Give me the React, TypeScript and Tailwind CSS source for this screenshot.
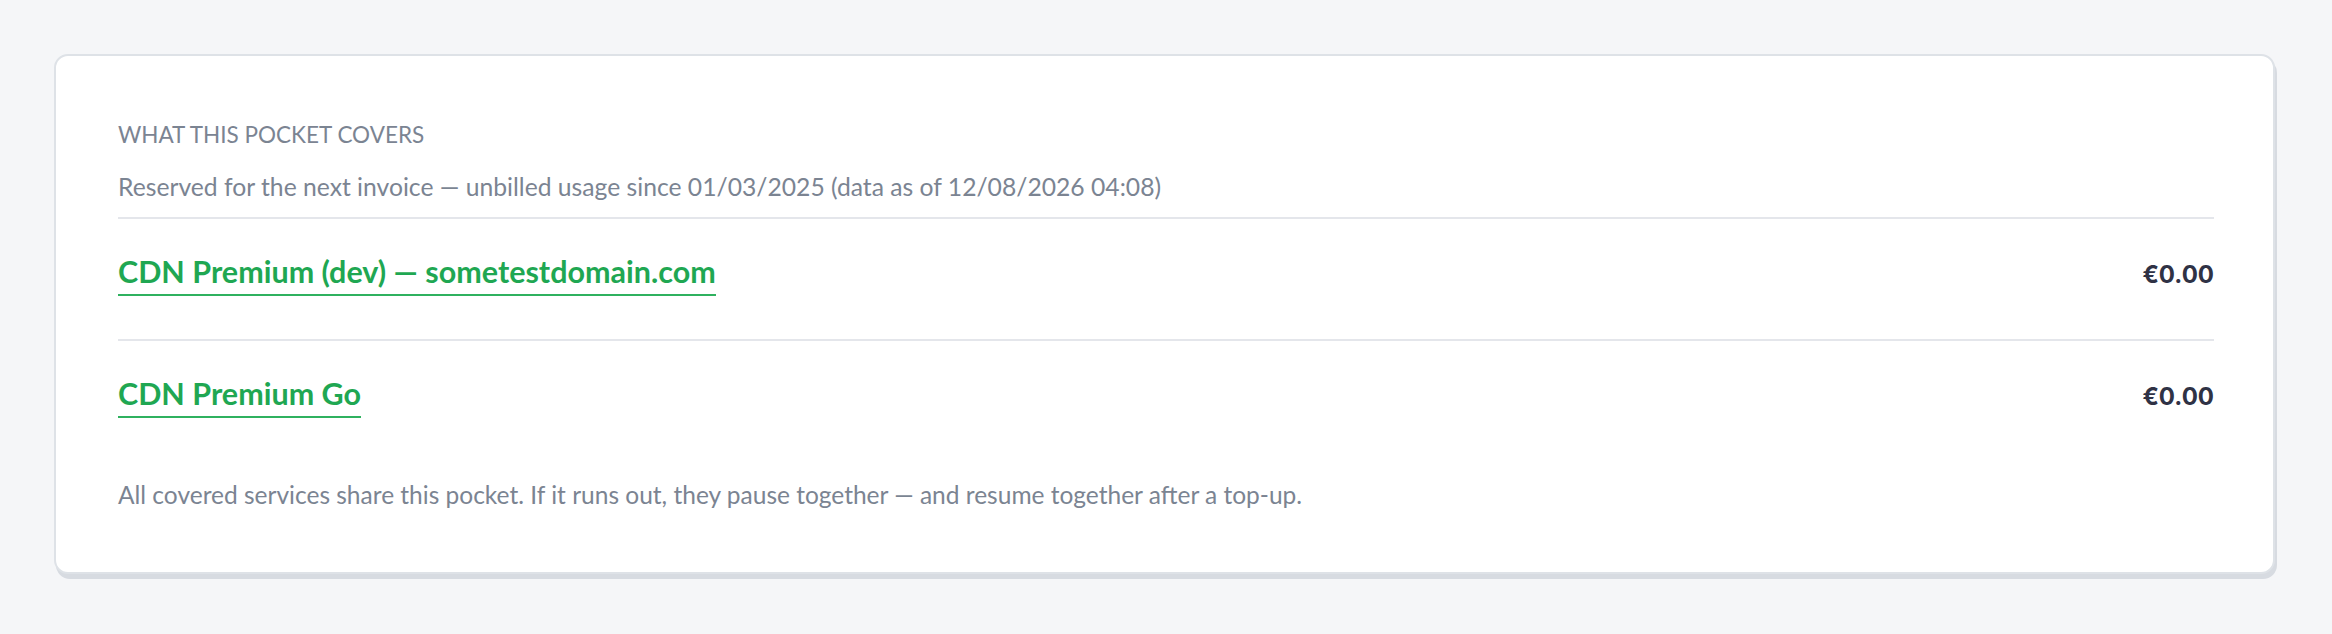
import React from "react";

const rows = [
  { name: "CDN Premium (dev) — sometestdomain.com", amount: "€0.00" },
  { name: "CDN Premium Go", amount: "€0.00" },
];

export default function App() {
  return (
    <div className="min-h-screen bg-[#f5f6f8] pl-[54px] pr-[57px] pt-[54px] pb-[54px] font-['Lato',sans-serif]">
      <div className="rounded-[14px] border-2 border-[#dee2e7] bg-white pl-[62px] pr-[59px] pt-[64px] pb-[60px] shadow-[2px_5px_0_0_#d7dbe1]">
        <div className="border-b-2 border-[#e4e6eb] pb-[13px]">
          <h2 className="text-[22.5px] leading-[30px] uppercase text-[#7b8492]">
            What this pocket covers
          </h2>
          <p className="mt-[20px] text-[24.7px] leading-[34px] text-[#7b8492]">
            Reserved for the next invoice — unbilled usage since 01/03/2025 (data as of 12/08/2026 04:08)
          </p>
        </div>

        {rows.map((row, i) => (
          <div
            key={row.name}
            className={
              i === 0
                ? "flex h-[122px] items-baseline justify-between border-b-2 border-[#e4e6eb] pt-[32px]"
                : "flex h-[120px] items-baseline justify-between pt-[32px]"
            }
          >
            <a
              href="#"
              className="inline-block border-b-[2.5px] border-[#2fb15f] pb-[3px] text-[30.5px] font-bold leading-[40px] text-[#1fa752]"
            >
              {row.name}
            </a>
            <span className="font-['Inter',sans-serif] text-[24px] font-bold leading-[40px] text-[#2f3245]">
              {row.amount}
            </span>
          </div>
        ))}

        <p className="mt-[17px] text-[24.5px] leading-[34px] text-[#7b8492]">
          All covered services share this pocket. If it runs out, they pause together — and resume together after a top-up.
        </p>
      </div>
    </div>
  );
}
